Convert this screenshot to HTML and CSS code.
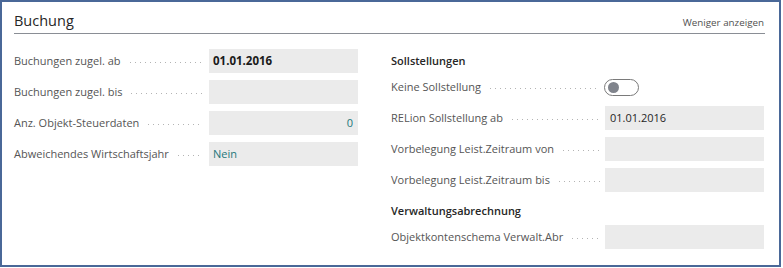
FILE: index.html
```html
<!DOCTYPE html>
<html lang="de">
<head>
<meta charset="utf-8">
<title>Buchung</title>
<link rel="stylesheet" href="styles.css">
</head>
<body>
<div class="card">
  <div class="head">
    <h2 class="title">Buchung</h2>
    <a class="more">Weniger anzeigen</a>
  </div>
  <div class="cols">
    <div class="col col-left">
      <div class="row">
        <div class="lbl"><span>Buchungen zugel. ab</span><i class="lead"></i></div>
        <div class="val strong">01.01.2016</div>
      </div>
      <div class="row">
        <div class="lbl"><span>Buchungen zugel. bis</span><i class="lead"></i></div>
        <div class="val"></div>
      </div>
      <div class="row">
        <div class="lbl"><span>Anz. Objekt-Steuerdaten</span><i class="lead"></i></div>
        <div class="val link num">0</div>
      </div>
      <div class="row">
        <div class="lbl"><span>Abweichendes Wirtschaftsjahr</span><i class="lead"></i></div>
        <div class="val link">Nein</div>
      </div>
    </div>
    <div class="col col-right">
      <div class="group">Sollstellungen</div>
      <div class="row">
        <div class="lbl"><span>Keine Sollstellung</span><i class="lead"></i></div>
        <div class="val plain"><span class="toggle"><span class="knob"></span></span></div>
      </div>
      <div class="row">
        <div class="lbl"><span>RELion Sollstellung ab</span><i class="lead"></i></div>
        <div class="val">01.01.2016</div>
      </div>
      <div class="row">
        <div class="lbl"><span>Vorbelegung Leist.Zeitraum von</span><i class="lead"></i></div>
        <div class="val"></div>
      </div>
      <div class="row">
        <div class="lbl"><span>Vorbelegung Leist.Zeitraum bis</span><i class="lead"></i></div>
        <div class="val"></div>
      </div>
      <div class="group">Verwaltungsabrechnung</div>
      <div class="row">
        <div class="lbl"><span>Objektkontenschema Verwalt.Abr</span><i class="lead"></i></div>
        <div class="val"></div>
      </div>
    </div>
  </div>
</div>
</body>
</html>
```
FILE: styles.css
```css
html, body {
  margin: 0;
  padding: 0;
  background: #ffffff;
}

body {
  font-family: "Open Sans", "Noto Sans", sans-serif;
  color: #505050;
}

.card {
  box-sizing: border-box;
  width: 781px;
  height: 267px;
  border: 2px solid #4a6898;
  padding: 8px 14px 0 12px;
}

.head {
  display: flex;
  align-items: baseline;
  justify-content: space-between;
  border-bottom: 1px solid #8a8e95;
  padding-bottom: 1px;
}

.title {
  margin: 0;
  font-size: 14.5px;
  line-height: 22px;
  font-weight: 400;
  color: #262626;
}

.more {
  font-size: 9.8px;
  color: #505050;
  margin-right: 1px;
}

.cols {
  display: flex;
  gap: 33px;
  margin-top: 15px;
}

.col {
  display: flex;
  flex-direction: column;
  gap: 7px;
}

.col-left {
  width: 344px;
}

.col-right {
  width: 373px;
}

.row {
  display: flex;
  height: 24px;
  align-items: center;
}

.lbl {
  flex: 1;
  display: flex;
  align-items: center;
  font-size: 11px;
  line-height: 24px;
  white-space: nowrap;
  color: #555555;
}

.lead {
  flex: 1;
  height: 1px;
  margin: 2px 6px 0 9px;
  background-image: linear-gradient(to right, #b4b4b4 1px, transparent 1px);
  background-size: 5px 1px;
  background-repeat: repeat-x;
}

.col-right .lead {
  margin-right: 5px;
}

.val {
  box-sizing: border-box;
  width: 149px;
  height: 24px;
  background: #ebebeb;
  padding: 0 5px 0 4px;
  font-size: 11px;
  line-height: 24px;
  color: #262626;
}

.col-right .val {
  width: 159px;
  padding-left: 5px;
}

.val.strong {
  font-weight: 700;
  font-size: 11.5px;
  color: #1a1a1a;
}

.val.link {
  color: #24777a;
}

.val.num {
  text-align: right;
}

.col-right .val.plain {
  background: transparent;
  padding: 0;
  display: flex;
  align-items: center;
}

.toggle {
  box-sizing: border-box;
  display: block;
  width: 35px;
  height: 17px;
  margin-left: -1px;
  border: 1px solid #7a7a7a;
  border-radius: 9px;
  position: relative;
}

.knob {
  position: absolute;
  left: 3px;
  top: 2px;
  width: 11px;
  height: 11px;
  border-radius: 50%;
  background: #80848c;
}

.group {
  height: 24px;
  line-height: 24px;
  font-size: 11px;
  font-weight: 600;
  color: #262626;
  margin-bottom: -5px;
}
```
